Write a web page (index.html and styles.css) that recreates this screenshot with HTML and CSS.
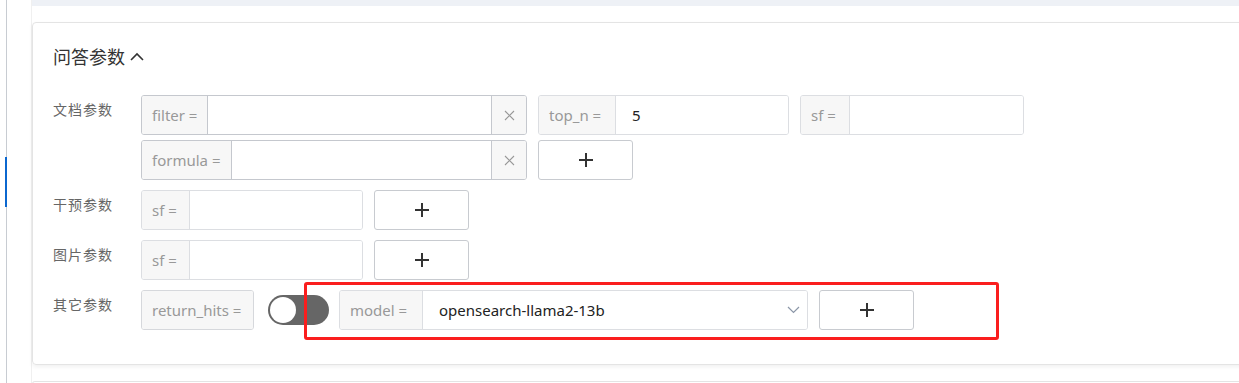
FILE: index.html
```html
<!DOCTYPE html>
<html lang="zh-CN">
<head>
    <meta charset="utf-8">
    <meta name="viewport" content="width=device-width, initial-scale=1.0">
    <title>问答参数</title>
    <link rel="stylesheet" href="styles.css">
</head>
<body>
    <div class="page">
        <div class="rail">
            <div class="rail-active"></div>
        </div>
        <div class="main">
            <div class="banner"></div>
            <div class="card">
                <div class="card-title">
                    问答参数
                    <svg class="caret" width="14" height="9" viewBox="0 0 14 9"><path d="M1 8 L7 2 L13 8" fill="none" stroke="#333" stroke-width="1.6"/></svg>
                </div>

                <div class="param-list">
                    <div class="param-row">
                        <div class="param-label">文档参数</div>
                        <div class="param-lines">
                            <div class="param-line">
                                <div class="group group-dark w-filter">
                                    <span class="addon">filter =</span>
                                    <span class="field"></span>
                                    <span class="addon clear">
                                        <svg width="11" height="11" viewBox="0 0 11 11"><path d="M1 1 L10 10 M10 1 L1 10" stroke="#999" stroke-width="1.1"/></svg>
                                    </span>
                                </div>
                                <div class="group w-topn">
                                    <span class="addon addon-topn">top_n =</span>
                                    <span class="field value">5</span>
                                </div>
                                <div class="group w-sf">
                                    <span class="addon addon-sf">sf =</span>
                                    <span class="field"></span>
                                </div>
                            </div>
                            <div class="param-line">
                                <div class="group group-dark w-filter">
                                    <span class="addon">formula =</span>
                                    <span class="field"></span>
                                    <span class="addon clear">
                                        <svg width="11" height="11" viewBox="0 0 11 11"><path d="M1 1 L10 10 M10 1 L1 10" stroke="#999" stroke-width="1.1"/></svg>
                                    </span>
                                </div>
                                <button class="add-btn"><svg width="16" height="16" viewBox="0 0 16 16"><path d="M8 1 V15 M1 8 H15" stroke="#333" stroke-width="2"/></svg></button>
                            </div>
                        </div>
                    </div>

                    <div class="param-row">
                        <div class="param-label">干预参数</div>
                        <div class="param-lines">
                            <div class="param-line">
                                <div class="group w-sf2">
                                    <span class="addon addon-sf2">sf =</span>
                                    <span class="field"></span>
                                </div>
                                <button class="add-btn"><svg width="16" height="16" viewBox="0 0 16 16"><path d="M8 1 V15 M1 8 H15" stroke="#333" stroke-width="2"/></svg></button>
                            </div>
                        </div>
                    </div>

                    <div class="param-row">
                        <div class="param-label">图片参数</div>
                        <div class="param-lines">
                            <div class="param-line">
                                <div class="group w-sf2">
                                    <span class="addon addon-sf2">sf =</span>
                                    <span class="field"></span>
                                </div>
                                <button class="add-btn"><svg width="16" height="16" viewBox="0 0 16 16"><path d="M8 1 V15 M1 8 H15" stroke="#333" stroke-width="2"/></svg></button>
                            </div>
                        </div>
                    </div>

                    <div class="param-row">
                        <div class="param-label">其它参数</div>
                        <div class="param-lines">
                            <div class="param-line">
                                <div class="group single">
                                    <span class="addon">return_hits =</span>
                                </div>
                                <div class="switch"><span class="knob"></span></div>
                                <div class="group w-model">
                                    <span class="addon addon-model">model =</span>
                                    <span class="field value select">
                                        opensearch-llama2-13b
                                        <svg width="13" height="8" viewBox="0 0 13 8"><path d="M1 1 L6.5 6.5 L12 1" fill="none" stroke="#8c97a8" stroke-width="1.2"/></svg>
                                    </span>
                                </div>
                                <button class="add-btn"><svg width="16" height="16" viewBox="0 0 16 16"><path d="M8 1 V15 M1 8 H15" stroke="#333" stroke-width="2"/></svg></button>
                            </div>
                        </div>
                    </div>
                </div>

                <div class="highlight"></div>
            </div>
            <div class="card card-next"></div>
        </div>
    </div>
</body>
</html>
```

FILE: styles.css
```css
*{
    margin: 0;
    padding: 0;
    box-sizing: border-box;
}
html, body{
    background: #ffffff;
    overflow: hidden;
    height: 100%;
}
body{
    font-family: "Noto Sans", "Noto Sans CJK SC", sans-serif;
    color: #333333;
}
.page{
    display: flex;
    height: 383px;
}
.rail{
    width: 32px;
    flex-shrink: 0;
    position: relative;
    border-right: 1px solid #f0f0f0;
}
.rail::before{
    content: "";
    position: absolute;
    left: 6px;
    top: 0;
    bottom: 0;
    width: 1px;
    background: #c8ccd2;
}
.rail-active{
    position: absolute;
    left: 5px;
    top: 157px;
    width: 2px;
    height: 50px;
    background: #0b67cf;
}
.main{
    flex: 1;
    min-width: 0;
}
.banner{
    height: 6px;
    background: #eef1f6;
    margin-right: -20px;
}
.card{
    position: relative;
    margin-top: 16px;
    margin-right: -20px;
    border: 1px solid #e4e4e4;
    border-radius: 4px;
    box-shadow: 0 2px 4px rgba(0,0,0,0.06);
    padding: 22px 20px 34px 20px;
}
.card-next{
    margin-top: 16px;
    height: 3px;
    padding: 0;
    border-bottom: none;
    box-shadow: none;
    border-radius: 4px 4px 0 0;
}
.card-title{
    font-size: 18px;
    line-height: 24px;
    height: 24px;
    color: #333333;
    display: flex;
    align-items: center;
    margin-bottom: 26px;
}
.caret{
    margin-left: 5px;
    margin-top: -2px;
}
.param-list{
    display: flex;
    flex-direction: column;
    gap: 10px;
}
.param-row{
    display: flex;
}
.param-label{
    width: 88px;
    flex-shrink: 0;
    font-size: 14px;
    line-height: 20px;
    padding-top: 5px;
    color: #666666;
    letter-spacing: 1px;
}
.param-lines{
    display: flex;
    flex-direction: column;
    gap: 5px;
}
.param-line{
    display: flex;
    align-items: center;
    gap: 11px;
    height: 40px;
}
.group{
    display: flex;
    height: 40px;
    flex-shrink: 0;
    border: 1px solid #dcdee2;
    border-radius: 3px;
    overflow: hidden;
    font-size: 15px;
    line-height: 20px;
}
.group-dark{
    border-color: #c5c8ce;
}
.group-dark .addon{
    border-color: #c5c8ce;
}
.addon{
    display: flex;
    align-items: center;
    padding: 0 10px;
    background: #f7f7f7;
    color: #999999;
    border-right: 1px solid #dcdee2;
    white-space: nowrap;
}
.addon.clear{
    border-right: none;
    border-left: 1px solid #c5c8ce;
    width: 35px;
    justify-content: center;
    padding: 0;
}
.field{
    flex: 1;
    display: flex;
    align-items: center;
    background: #ffffff;
}
.value{
    color: #222222;
    padding-left: 16px;
}
.select{
    justify-content: space-between;
    padding-right: 7px;
}
.w-filter{ width: 386px; }
.w-topn{ width: 251px; }
.w-sf{ width: 224px; }
.w-sf2{ width: 222px; }
.w-model{ width: 469px; }
.addon-topn{ width: 77px; }
.addon-sf{ width: 49px; }
.addon-sf2{ width: 48px; }
.addon-model{ width: 83px; }
.single{
    width: 113px;
    border-color: #d6d8dc;
}
.single .addon{
    border-right: none;
    width: 100%;
}
.add-btn{
    width: 95px;
    height: 40px;
    flex-shrink: 0;
    border: 1px solid #c8cbd0;
    border-radius: 3px;
    background: #ffffff;
    display: flex;
    align-items: center;
    justify-content: center;
}
.switch{
    width: 61px;
    height: 30px;
    flex-shrink: 0;
    border-radius: 15px;
    background: #666666;
    margin-left: 3px;
    margin-right: -1px;
    padding: 2px;
    display: flex;
}
.knob{
    width: 26px;
    height: 26px;
    border-radius: 50%;
    background: #ffffff;
}
.highlight{
    position: absolute;
    left: 271px;
    top: 259px;
    width: 695px;
    height: 58px;
    border: 3px solid #fa1e1e;
    border-radius: 3px;
    pointer-events: none;
}
```
